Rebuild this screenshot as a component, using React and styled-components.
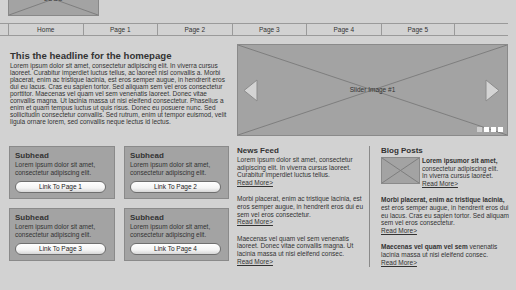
import React from 'react';
import styled, { createGlobalStyle } from 'styled-components';

const GlobalStyle = createGlobalStyle`
  html, body {
    margin: 0;
    padding: 0;
    background: #d2d2d2;
    font-family: "Liberation Sans", Arial, sans-serif;
    color: #333;
  }
`;

const pages = ['Home', 'Page 1', 'Page 2', 'Page 3', 'Page 4', 'Page 5'];

const cards = [1, 2, 3, 4];

const news = [
  'Lorem ipsum dolor sit amet, consectetur adipiscing elit. In viverra cursus laoreet. Curabitur imperdiet luctus tellus.',
  'Morbi placerat, enim ac tristique lacinia, est eros semper augue, in hendrerit eros dui eu sem vel eros consectetur.',
  'Maecenas vel quam vel sem venenatis laoreet. Donec vitae convallis magna. Ut lacinia massa ut nisi eleifend consec.',
];

const Placeholder = ({ children }) => (
  <>
    <svg width="100%" height="100%" preserveAspectRatio="none" viewBox="0 0 100 100">
      <line x1="0" y1="0" x2="100" y2="100" stroke="#7e7e7e" strokeWidth="1" vectorEffect="non-scaling-stroke" />
      <line x1="100" y1="0" x2="0" y2="100" stroke="#7e7e7e" strokeWidth="1" vectorEffect="non-scaling-stroke" />
    </svg>
    {children}
  </>
);

const App = () => {
  return (
    <Page>
      <GlobalStyle />
      <Header>
        <Logo>
          <Placeholder>
            <LogoText>LOGO</LogoText>
          </Placeholder>
        </Logo>
      </Header>

      <Nav>
        {pages.map((p) => (
          <NavItem key={p}>{p}</NavItem>
        ))}
      </Nav>

      <Hero>
        <Intro>
          <Headline>This the headline for the homepage</Headline>
          <IntroText>
            Lorem ipsum dolor sit amet, consectetur adipiscing elit. In viverra cursus
            laoreet. Curabitur imperdiet luctus tellus, ac laoreet nisl convallis a. Morbi
            placerat, enim ac tristique lacinia, est eros semper augue, in hendrerit eros
            dui eu lacus. Cras eu sapien tortor. Sed aliquam sem vel eros consectetur
            porttitor. Maecenas vel quam vel sem venenatis laoreet. Donec vitae
            convallis magna. Ut lacinia massa ut nisi eleifend consectetur. Phasellus a
            enim et quam tempus luctus ut quis risus. Donec eu posuere nunc. Sed
            sollicitudin consectetur convallis. Sed rutrum, enim ut tempor euismod, velit
            ligula ornare lorem, sed convallis neque lectus id lectus.
          </IntroText>
        </Intro>

        <Slider>
          <Placeholder>
            <SliderLabel>Slider Image #1</SliderLabel>
          </Placeholder>
          <Arrow $side="left">
            <svg width="15" height="23" viewBox="0 0 15 23">
              <polygon points="14,1 14,22 1,11.5" fill="#d4d4d4" stroke="#8c8c8c" strokeWidth="1" />
            </svg>
          </Arrow>
          <Arrow $side="right">
            <svg width="15" height="23" viewBox="0 0 15 23">
              <polygon points="1,1 1,22 14,11.5" fill="#d4d4d4" stroke="#8c8c8c" strokeWidth="1" />
            </svg>
          </Arrow>
          <Dots>
            {[0, 1, 2, 3].map((i) => (
              <Dot key={i} $active={i === 0} />
            ))}
          </Dots>
        </Slider>
      </Hero>

      <Bottom>
        <CardGrid>
          {cards.map((n) => (
            <Card key={n}>
              <Subhead>Subhead</Subhead>
              <CardText>
                Lorem ipsum dolor sit amet,
                <br />
                consectetur adipiscing elit.
              </CardText>
              <LinkButton>Link To Page {n}</LinkButton>
            </Card>
          ))}
        </CardGrid>

        <NewsColumn>
          <ColumnTitle>News Feed</ColumnTitle>
          {news.map((t, i) => (
            <Post key={i}>
              {t}
              <br />
              <ReadMore>Read More&gt;</ReadMore>
            </Post>
          ))}
        </NewsColumn>

        <Divider />

        <BlogColumn>
          <ColumnTitle>Blog Posts</ColumnTitle>
          <FirstPost>
            <Thumb>
              <Placeholder />
            </Thumb>
            <Post>
              <b>Lorem ipsumor sit amet,</b>
              <br />
              consectetur adipiscing elit.
              <br />
              In viverra cursus laoreet.
              <br />
              <ReadMore>Read More&gt;</ReadMore>
            </Post>
          </FirstPost>
          <Post $nowrap>
            <b>Morbi placerat, enim ac tristique lacinia,</b>
            <br />
            est eros semper augue, in hendrerit eros dui
            <br />
            eu lacus. Cras eu sapien tortor. Sed aliquam
            <br />
            sem vel eros consectetur.
            <br />
            <ReadMore>Read More&gt;</ReadMore>
          </Post>
          <Post $nowrap>
            <b>Maecenas vel quam vel sem</b> venenatis
            <br />
            lacinia massa ut nisi eleifend consec.
            <br />
            <ReadMore>Read More&gt;</ReadMore>
          </Post>
        </BlogColumn>
      </Bottom>
    </Page>
  );
};

const Page = styled.div`
  width: 516px;
  height: 290px;
  overflow: hidden;
`;

const Header = styled.div`
  display: flex;
  align-items: flex-end;
  height: 16px;
  padding-left: 8px;
`;

const Logo = styled.div`
  position: relative;
  flex: none;
  width: 91px;
  height: 34px;
  background: #a3a3a3;
  border: 1px solid #888;
  box-sizing: border-box;
  svg {
    display: block;
  }
`;

const LogoText = styled.span`
  position: absolute;
  left: 0;
  right: 0;
  top: 12px;
  text-align: center;
  font-size: 6.5px;
  color: #333;
`;

const Nav = styled.div`
  display: flex;
  margin: 7px 8px 0 0;
  padding-left: 8px;
  height: 11px;
  border-top: 1px solid #9a9a9a;
  border-bottom: 1px solid #9a9a9a;
`;

const NavItem = styled.div`
  width: 74.5px;
  border-left: 1px solid #9a9a9a;
  box-sizing: border-box;
  font-size: 6.5px;
  line-height: 11px;
  text-align: center;
  color: #333;
  &:last-child {
    border-right: 1px solid #9a9a9a;
  }
`;

const Hero = styled.div`
  display: flex;
  margin-top: 8px;
  height: 92px;
`;

const Intro = styled.div`
  width: 218px;
  padding: 6px 0 0 10px;
`;

const Headline = styled.h1`
  margin: 0;
  font-size: 9.6px;
  line-height: 12px;
  font-weight: bold;
  color: #333;
`;

const IntroText = styled.p`
  margin: 0;
  font-size: 6.5px;
  line-height: 7px;
  color: #333;
`;

const Slider = styled.div`
  position: relative;
  margin-left: 9px;
  width: 271px;
  height: 92px;
  background: #a3a3a3;
  border: 1px solid #8a8a8a;
  box-sizing: border-box;
  svg {
    display: block;
  }
`;

const SliderLabel = styled.span`
  position: absolute;
  left: 0;
  right: 0;
  top: 41px;
  text-align: center;
  font-size: 6.5px;
  color: #333;
`;

const Arrow = styled.div`
  position: absolute;
  top: 34px;
  ${(p) => (p.$side === 'left' ? 'left: 5px;' : 'right: 7px;')}
`;

const Dots = styled.div`
  position: absolute;
  right: 4px;
  bottom: 3px;
  display: flex;
  gap: 2px;
`;

const Dot = styled.div`
  width: 5px;
  height: 5px;
  background: ${(p) => (p.$active ? '#cfcfcf' : '#fff')};
`;

const Bottom = styled.div`
  display: flex;
  align-items: flex-start;
  margin-top: 10px;
`;

const CardGrid = styled.div`
  display: grid;
  grid-template-columns: 106px 105px;
  grid-auto-rows: 53px;
  column-gap: 9px;
  row-gap: 9px;
  margin-left: 9px;
`;

const Card = styled.div`
  background: #a3a3a3;
  border: 1px solid #8a8a8a;
  box-sizing: border-box;
  padding: 4px 0 0 5px;
`;

const Subhead = styled.div`
  font-size: 8px;
  line-height: 10px;
  font-weight: bold;
  color: #333;
`;

const CardText = styled.div`
  font-size: 6.5px;
  line-height: 8px;
  color: #333;
`;

const LinkButton = styled.div`
  margin-top: 4px;
  width: 91px;
  height: 12px;
  box-sizing: border-box;
  border: 1px solid #6f6f6f;
  border-radius: 6px;
  background: linear-gradient(#ffffff, #f4f4f4 60%, #d6d6d6);
  font-size: 6.5px;
  line-height: 10px;
  text-align: center;
  color: #222;
`;

const NewsColumn = styled.div`
  width: 127px;
  margin-left: 8px;
`;

const ColumnTitle = styled.div`
  font-size: 8px;
  line-height: 10px;
  font-weight: bold;
  color: #333;
`;

const Post = styled.p`
  margin: 0 0 9px 0;
  font-size: 6.5px;
  line-height: 7.6px;
  color: #333;
  white-space: ${(p) => (p.$nowrap ? 'nowrap' : 'normal')};
  b {
    font-weight: bold;
  }
`;

const ReadMore = styled.span`
  text-decoration: underline;
`;

const Divider = styled.div`
  width: 1px;
  height: 121px;
  margin-left: 5px;
  background: #8a8a8a;
`;

const BlogColumn = styled.div`
  width: 127px;
  margin-left: 11px;
`;

const FirstPost = styled.div`
  display: flex;
  gap: 2px;
  padding-top: 1px;
`;

const Thumb = styled.div`
  flex: none;
  width: 39px;
  height: 27px;
  background: #a3a3a3;
  border: 1px solid #8a8a8a;
  box-sizing: border-box;
  svg {
    display: block;
  }
`;

export default App;
